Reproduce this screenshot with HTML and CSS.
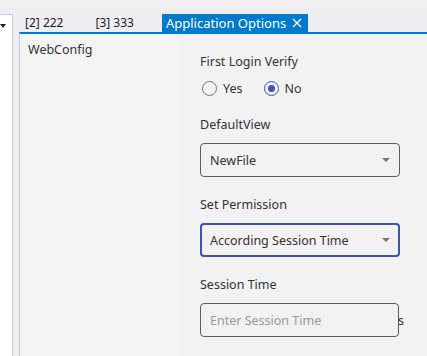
FILE: index.html
```html
<!DOCTYPE html>
<html lang="en">
<head>
    <meta charset="UTF-8">
    <meta name="viewport" content="width=device-width, initial-scale=1.0">
    <title>Application Options</title>
    <link rel="stylesheet" href="styles.css">
</head>
<body>
    <div class="top-strip"></div>
    <div class="workspace">
        <div class="side-pane">
            <span class="side-arrow"></span>
        </div>

        <div class="doc-area">
            <div class="tabs">
                <div class="tab">[2] 222</div>
                <div class="tab">[3] 333</div>
                <div class="tab active">
                    Application Options
                    <svg class="tab-close" width="10" height="10" viewBox="0 0 10 10">
                        <path d="M1 1 L9 9 M9 1 L1 9" stroke="#fff" stroke-width="1.4"/>
                    </svg>
                </div>
            </div>

            <div class="tab-body">
                <div class="tree">
                    <div class="tree-item">WebConfig</div>
                </div>

                <form class="options">
                    <div class="field">
                        <div class="field-label">First Login Verify</div>
                        <div class="radio-row">
                            <label class="radio">
                                <input type="radio" name="verify" value="yes">
                                <span>Yes</span>
                            </label>
                            <label class="radio">
                                <input type="radio" name="verify" value="no" checked>
                                <span>No</span>
                            </label>
                        </div>
                    </div>

                    <div class="field">
                        <div class="field-label spaced">DefaultView</div>
                        <div class="select">
                            <span>NewFile</span>
                            <span class="caret"></span>
                        </div>
                    </div>

                    <div class="field">
                        <div class="field-label spaced">Set Permission</div>
                        <div class="select focused">
                            <span>According Session Time</span>
                            <span class="caret"></span>
                        </div>
                    </div>

                    <div class="field">
                        <div class="field-label spaced">Session Time</div>
                        <div class="input-row">
                            <input type="text" class="text-input" placeholder="Enter Session Time">
                            <span class="unit">s</span>
                        </div>
                    </div>
                </form>
            </div>
        </div>
    </div>
</body>
</html>
```

FILE: styles.css
```css
body {
    margin: 0;
    height: 356px;
    overflow: hidden;
    background-color: #f0f0f0;
    font-family: "Noto Sans", Arial, sans-serif;
    color: #333;
    display: flex;
    flex-direction: column;
}

.top-strip {
    height: 11px;
    background-color: #f0f0f0;
    border-bottom: 6px solid #eeedf2;
}

.workspace {
    flex: 1;
    display: flex;
}

.side-pane {
    width: 12px;
    background: white;
    border-top: 1px solid #cfcddc;
    border-right: 1px solid #cfcddc;
    position: relative;
}

.side-arrow {
    position: absolute;
    left: 0;
    top: 9px;
    border-left: 3px solid transparent;
    border-right: 3px solid transparent;
    border-top: 4px solid #222;
}

.doc-area {
    flex: 1;
    display: flex;
    flex-direction: column;
    background-color: #eeedf2;
    padding-left: 6px;
}

.tabs {
    display: flex;
    height: 18px;
    font-size: 12px;
    color: #1e1e1e;
}

.tab {
    padding: 0 26px 0 6px;
    line-height: 18px;
}

.tab.active {
    margin-left: 2px;
    background-color: #007acc;
    color: white;
    font-size: 13px;
    padding: 0 6px 0 4px;
    display: flex;
    align-items: center;
}

.tab-close {
    margin-left: 6px;
}

.tab-body {
    flex: 1;
    display: flex;
    border-top: 2px solid #007acc;
    border-left: 1px solid #cbc9d8;
    background-color: #f3f3f3;
}

.tree {
    width: 150px;
    padding: 7px 0 0 8px;
    font-size: 12.5px;
}

.tree-item {
    line-height: 18px;
}

.options {
    flex: 1;
    padding: 19px 0 0 22px;
    background-color: #f2f2f2;
    font-size: 12.5px;
}

.field {
    width: 200px;
    margin-bottom: 19px;
}

.field-label {
    line-height: 18px;
    margin-bottom: 8px;
}

.field-label.spaced {
    margin-bottom: 9px;
}

.radio-row {
    display: flex;
    height: 18px;
    align-items: center;
}

.radio {
    display: flex;
    align-items: center;
    margin-right: 19px;
}

.radio input {
    appearance: none;
    width: 15px;
    height: 15px;
    margin: 0 6px 0 2px;
    border: 1.5px solid #757575;
    border-radius: 50%;
    display: grid;
    place-content: center;
}

.radio input:checked {
    border-color: #3f51b5;
}

.radio input:checked::before {
    content: "";
    width: 7px;
    height: 7px;
    border-radius: 50%;
    background-color: #3f51b5;
}

.select {
    height: 34px;
    box-sizing: border-box;
    border: 1px solid #5c5c5c;
    border-radius: 4px;
    display: flex;
    align-items: center;
    justify-content: space-between;
    padding: 0 9px;
    font-size: 12.5px;
}

.select.focused {
    border: 2px solid #3f51b5;
    padding: 0 8px;
}

.caret {
    border-left: 4px solid transparent;
    border-right: 4px solid transparent;
    border-top: 4px solid #757575;
}

.input-row {
    display: flex;
    align-items: center;
}

.text-input {
    width: 200px;
    height: 34px;
    box-sizing: border-box;
    border: 1px solid #5c5c5c;
    border-radius: 4px;
    padding: 0 9px;
    background: transparent;
    font-family: inherit;
    font-size: 12.5px;
    color: #333;
}

.text-input::placeholder {
    color: #9a9a9a;
}

.unit {
    margin-left: -1px;
    font-size: 12.5px;
}
```
